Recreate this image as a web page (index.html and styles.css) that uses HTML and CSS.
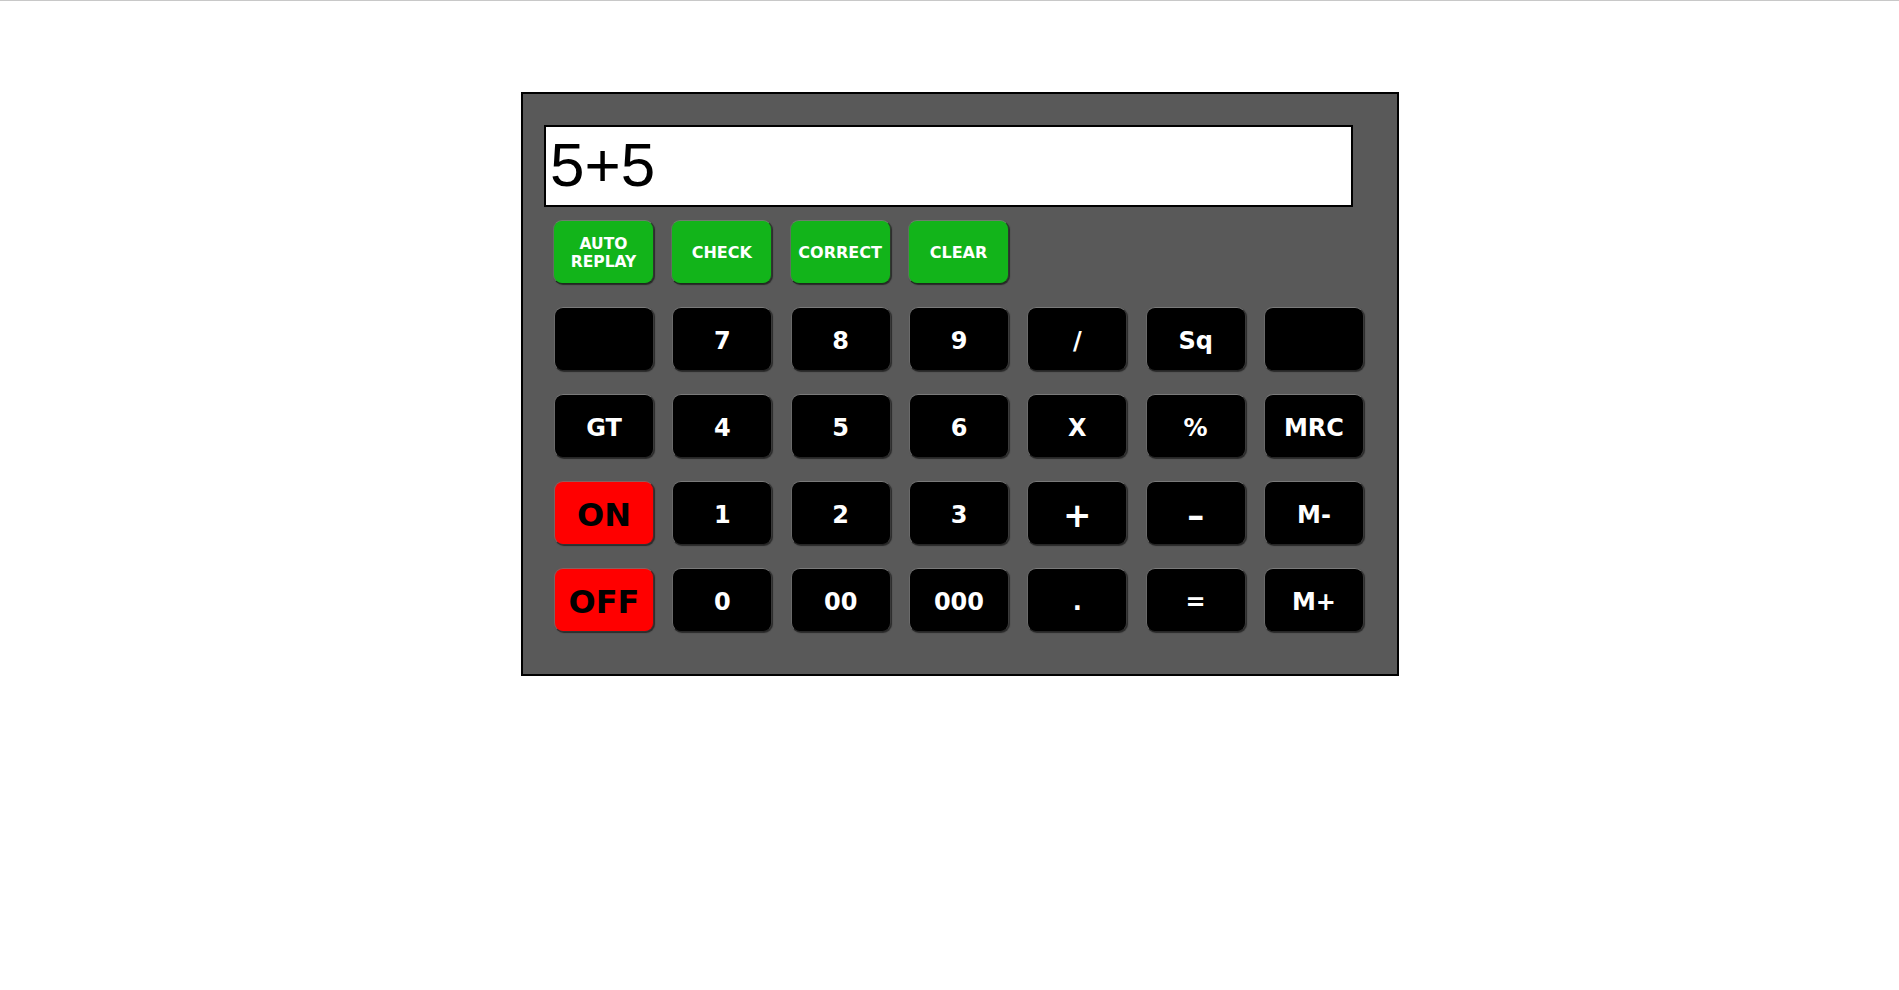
FILE: index.html
```html
<!DOCTYPE html>
<html>
<head>
<meta charset="utf-8">
<link rel="stylesheet" href="styles.css">
</head>
<body>
<div class="calc">
  <div class="display">5+5</div>
  <div class="row fn-row">
    <button class="key green two">AUTO<br>REPLAY</button>
    <button class="key green">CHECK</button>
    <button class="key green">CORRECT</button>
    <button class="key green">CLEAR</button>
  </div>
  <div class="row keys">
    <button class="key"></button>
    <button class="key">7</button>
    <button class="key">8</button>
    <button class="key">9</button>
    <button class="key">/</button>
    <button class="key">Sq</button>
    <button class="key"></button>

    <button class="key">GT</button>
    <button class="key">4</button>
    <button class="key">5</button>
    <button class="key">6</button>
    <button class="key">X</button>
    <button class="key">%</button>
    <button class="key">MRC</button>

    <button class="key red">ON</button>
    <button class="key">1</button>
    <button class="key">2</button>
    <button class="key">3</button>
    <button class="key big">+</button>
    <button class="key big">–</button>
    <button class="key">M-</button>

    <button class="key red">OFF</button>
    <button class="key">0</button>
    <button class="key">00</button>
    <button class="key">000</button>
    <button class="key">.</button>
    <button class="key">=</button>
    <button class="key">M+</button>
  </div>
</div>
</body>
</html>
```

FILE: styles.css
```css
html, body {
  margin: 0;
  padding: 0;
  background: #ffffff;
}
body {
  border-top: 1px solid #c8c8c8;
  min-height: 989px;
  box-sizing: border-box;
}
.calc {
  margin: 91px 0 0 521px;
  width: 878px;
  height: 584px;
  box-sizing: border-box;
  border: 2px solid #000;
  background: #595959;
  padding: 31px 0 0 21px;
}
.display {
  width: 809px;
  height: 82px;
  box-sizing: border-box;
  border: 2px solid #000;
  background: #fff;
  font-family: "Liberation Sans", Arial, sans-serif;
  font-size: 62px;
  line-height: 72px;
  padding: 2px 0 0 4px;
  color: #000;
}
.row {
  display: grid;
  grid-template-columns: repeat(7, 100px);
  column-gap: 18.33px;
  margin-left: 10px;
}
.fn-row {
  margin-top: 13px;
  margin-left: 9px;
}
.keys {
  margin-top: 23px;
  row-gap: 23px;
}
.key {
  height: 64px;
  width: 100px;
  box-sizing: border-box;
  border-radius: 9px;
  border: 1px solid;
  border-color: #7a7a7a #3a3a3a #262626 #6a6a6a;
  box-shadow: 1px 1px 1px #2a2a2a;
  background: #000;
  color: #fff;
  font-family: "DejaVu Sans", Verdana, sans-serif;
  font-weight: bold;
  font-size: 24px;
  padding: 3px 0 0 0;
  margin: 0;
  display: flex;
  align-items: center;
  justify-content: center;
  text-align: center;
}
.green {
  width: 101px;
  background: #12b41a;
  color: #fff;
  font-size: 16px;
  line-height: 18px;
  padding: 2px 0 0 0;
  border-color: #6e7d6e #2d3a2d #1e2a1e #5f6f5f;
}
.two {
  font-size: 15.5px;
}
.red {
  background: #ff0000;
  color: #000;
  font-size: 32px;
  border-color: #8a6060 #4a2a2a #333 #806060;
}
.big {
  font-size: 34px;
}
```
